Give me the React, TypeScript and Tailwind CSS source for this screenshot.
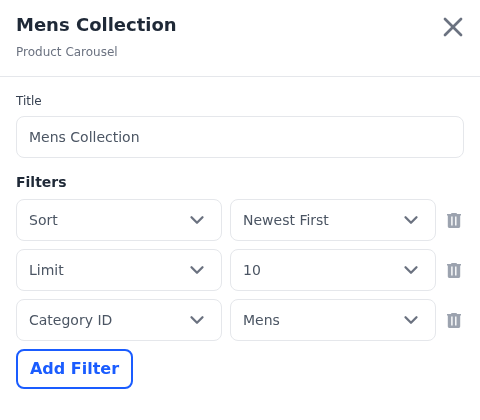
import { ChevronDown, X } from 'lucide-react';

const filters = [
  { field: 'Sort', value: 'Newest First' },
  { field: 'Limit', value: '10' },
  { field: 'Category ID', value: 'Mens' },
];

function TrashIcon() {
  return (
    <svg viewBox="0 0 20 20" className="w-5 h-5 text-[#9ca3af]" fill="currentColor">
      <path
        fillRule="evenodd"
        d="M7.5 3h5l.5 1H17v1.5h-.8V16.6a1.4 1.4 0 0 1-1.4 1.4H5.2a1.4 1.4 0 0 1-1.4-1.4V5.5H3V4h4l.5-1ZM7.2 6.4v9h1.4v-9H7.2Zm3.9 0v9h1.4v-9h-1.4Z"
      />
    </svg>
  );
}

function SelectBox({ text }: { text: string }) {
  return (
    <div className="w-[206px] h-[42px] flex items-center justify-between pl-3 pr-[13px] bg-white border border-[#e5e7eb] rounded-lg">
      <span className="text-sm text-[#4b5563]">{text}</span>
      <ChevronDown className="w-[22px] h-[22px] text-[#6b7280]" strokeWidth={2.5} />
    </div>
  );
}

export default function App() {
  return (
    <div className="w-[480px] h-[420px] bg-white overflow-hidden font-['DejaVu_Sans',sans-serif] will-change-transform">
      <header className="h-[77px] border-b border-[#e5e7eb] px-4 pt-3 flex justify-between">
        <div>
          <h1 className="text-lg leading-[26px] font-bold text-[#1f2937]">Mens Collection</h1>
          <p className="text-xs leading-4 mt-[6px] text-[#6b7280]">Product Carousel</p>
        </div>
        <button className="h-8 w-8 -mr-[5px] -mt-px flex items-center justify-center text-[#6b7280]">
          <X className="w-8 h-8" strokeWidth={2} />
        </button>
      </header>

      <div className="px-4 pt-4">
        <label className="block text-xs leading-4 text-[#374151] mb-[7px]">Title</label>
        <div className="h-[42px] flex items-center px-3 border border-[#e5e7eb] rounded-lg text-sm text-[#4b5563]">
          Mens Collection
        </div>

        <h2 className="text-sm leading-5 font-bold text-[#1f2937] mt-[14px] mb-[7px]">Filters</h2>

        <div className="flex flex-col gap-2">
          {filters.map((f) => (
            <div key={f.field} className="flex items-center gap-2">
              <SelectBox text={f.field} />
              <SelectBox text={f.value} />
              <button className="w-5 h-5 flex items-center justify-center shrink-0">
                <TrashIcon />
              </button>
            </div>
          ))}
        </div>

        <button className="mt-2 h-10 w-[117px] border-2 border-[#1a5cff] rounded-lg text-base font-bold text-[#1a5cff]">
          Add Filter
        </button>
      </div>
    </div>
  );
}
